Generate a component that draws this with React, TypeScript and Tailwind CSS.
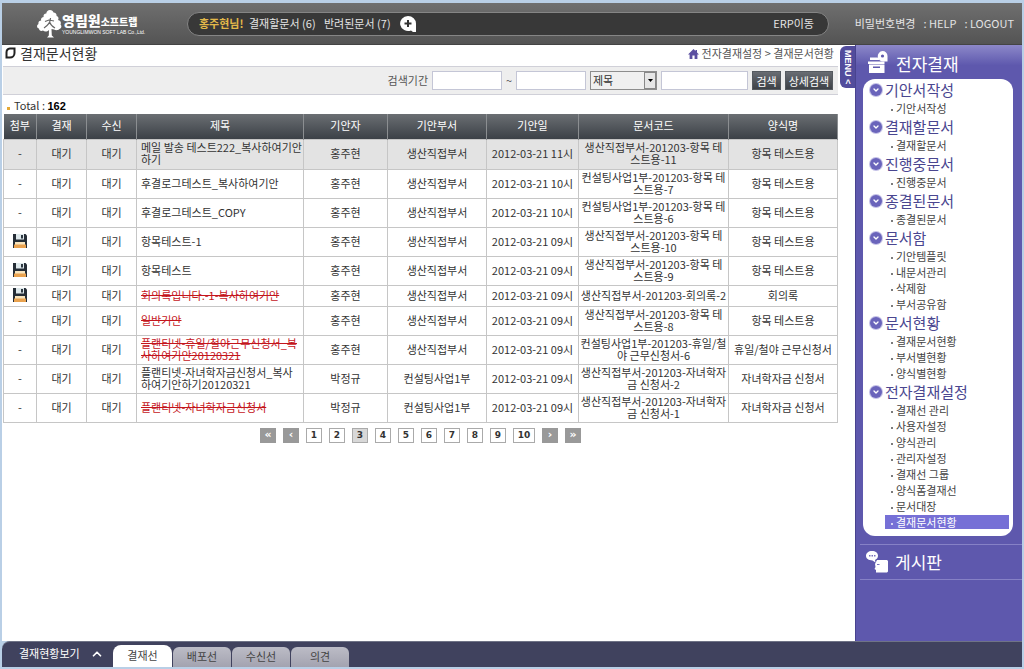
import React from "react";
import { ChevronDown, ChevronUp } from "lucide-react";

type DocRow = {
  attached?: boolean;
  title: string;
  rejected?: boolean;
  drafter: string;
  dept: string;
  date: string;
  code: string;
  form: string;
  selected?: boolean;
};

const rows: DocRow[] = [
  { title: "메일 발송 테스트222_복사하여기안\n하기", drafter: "홍주현", dept: "생산직접부서", date: "2012-03-21 11시", code: "생산직접부서-201203-항목 테\n스트용-11", form: "항목 테스트용", selected: true },
  { title: "후결로그테스트_복사하여기안", drafter: "홍주현", dept: "생산직접부서", date: "2012-03-21 10시", code: "컨설팅사업1부-201203-항목 테\n스트용-7", form: "항목 테스트용" },
  { title: "후결로그테스트_COPY", drafter: "홍주현", dept: "생산직접부서", date: "2012-03-21 10시", code: "컨설팅사업1부-201203-항목 테\n스트용-6", form: "항목 테스트용" },
  { attached: true, title: "항목테스트-1", drafter: "홍주현", dept: "생산직접부서", date: "2012-03-21 09시", code: "생산직접부서-201203-항목 테\n스트용-10", form: "항목 테스트용" },
  { attached: true, title: "항목테스트", drafter: "홍주현", dept: "생산직접부서", date: "2012-03-21 09시", code: "생산직접부서-201203-항목 테\n스트용-9", form: "항목 테스트용" },
  { attached: true, title: "회의록입니다.-1-복사하여기안", rejected: true, drafter: "홍주현", dept: "생산직접부서", date: "2012-03-21 09시", code: "생산직접부서-201203-회의록-2", form: "회의록" },
  { title: "일반기안", rejected: true, drafter: "홍주현", dept: "생산직접부서", date: "2012-03-21 09시", code: "생산직접부서-201203-항목 테\n스트용-8", form: "항목 테스트용" },
  { title: "플랜티넷-휴일/철야근무신청서_복\n사하여기안20120321", rejected: true, drafter: "홍주현", dept: "생산직접부서", date: "2012-03-21 09시", code: "컨설팅사업1부-201203-휴일/철\n야 근무신청서-6", form: "휴일/철야 근무신청서" },
  { title: "플랜티넷-자녀학자금신청서_복사\n하여기안하기20120321", drafter: "박정규", dept: "컨설팅사업1부", date: "2012-03-21 09시", code: "생산직접부서-201203-자녀학자\n금 신청서-2", form: "자녀학자금 신청서" },
  { title: "플랜티넷-자녀학자금신청서", rejected: true, drafter: "박정규", dept: "컨설팅사업1부", date: "2012-03-21 09시", code: "생산직접부서-201203-자녀학자\n금 신청서-1", form: "자녀학자금 신청서" },
];

const columns = [
  { name: "첨부", width: "w-[33px]" },
  { name: "결재", width: "w-[50px]" },
  { name: "수신", width: "w-[50px]" },
  { name: "제목", width: "" },
  { name: "기안자", width: "w-[84px]" },
  { name: "기안부서", width: "w-[99px]" },
  { name: "기안일", width: "w-[92px]" },
  { name: "문서코드", width: "w-[150px]" },
  { name: "양식명", width: "w-[109px]" },
];

const menu = [
  { title: "기안서작성", items: ["기안서작성"] },
  { title: "결재할문서", items: ["결재할문서"] },
  { title: "진행중문서", items: ["진행중문서"] },
  { title: "종결된문서", items: ["종결된문서"] },
  { title: "문서함", items: ["기안템플릿", "내문서관리", "삭제함", "부서공유함"] },
  { title: "문서현황", items: ["결재문서현황", "부서별현황", "양식별현황"] },
  {
    title: "전자결재설정",
    items: ["결재선 관리", "사용자설정", "양식관리", "관리자설정", "결재선 그룹", "양식폼결재선", "문서대장", "결재문서현황"],
  },
];

function TreeLogo() {
  return (
    <svg width="25" height="28" viewBox="0 0 25 28" fill="#fff" aria-hidden="true">
      <path d="M13 0c2 0 3 1 3.500 2.500 2 0 3.500 1.500 3 3.500 2 .5 2.500 2.500 1.500 4 2.500.5 3.500 2.500 2.500 4.500 1.500 1.500 1 4-1 4.500-1.500 1.500-4 1.500-5.500.5L14.500 19l.3 6.500 2.200 2h-7l1.800-2 .2-5.500c-2 2-4.500 2-6 .5-2 1-4 0-4-2C-.5 18-.5 15 1.500 14c-.5-2 .8-3.500 2.700-3.500C3.500 8.500 5 7 6.700 7 6 5 7.500 3.300 9.300 3.500 9.500 1.500 11 0 13 0z" />
      <path d="M13.500 8c0 4-2 7-6.500 10M12.500 12c1 3 3 4.500 5.500 6M8 11.500l4-1.500 5 1" fill="none" stroke="#666" strokeWidth="1.200" />
    </svg>
  );
}

function FloppyIcon() {
  return (
    <svg width="14" height="14" viewBox="0 0 14 14" className="mx-auto block" role="img" aria-label="첨부파일">
      <path d="M0 0h12.500L14 1.500V14H0z" fill="#252d36" />
      <path d="M3 0h8v5.500H3z" fill="#dfe9ec" />
      <path d="M8 1h2v3.500H8z" fill="#2d3740" />
      <path d="M2 8h10v3H2z" fill="#f8e4bd" />
      <path d="M1 10.500h12V14H1z" fill="#e9a24f" />
    </svg>
  );
}

function HomeIcon() {
  return (
    <svg width="11" height="10" viewBox="0 0 11 10" fill="#5b4fa0" aria-hidden="true">
      <path d="M5.500 0 0 5.500h1.600V10h2.800V6.500h2.200V10h2.800V5.500H11L9 3.500V1H7.500v1z" />
    </svg>
  );
}

function DrawerIcon() {
  return (
    <svg width="20" height="22" viewBox="0 0 20 22" fill="#fff" aria-hidden="true">
      <path d="M2 6.500h9V9H2zM0 10.500h16.500V13H0zM1 13.500h15.500V22H1z" />
      <path d="M5 15.500h7V17H5z" fill="#5e58ad" />
      <path d="M14.500 0a5 5 0 0 1 5 5v5.500h-4A5 5 0 1 1 14.500 0z" />
      <circle cx="14.500" cy="5" r="1.600" fill="#5e58ad" />
    </svg>
  );
}

function BoardIcon() {
  return (
    <svg width="23" height="24" viewBox="0 0 23 24" fill="#fff" aria-hidden="true">
      <path d="M6 1c3.500 0 6 2 6 4.800 0 2-1.500 3.700-3 4.200l.5 2.500-3-2C2.500 10.500 0 8.500 0 5.800S2.500 1 6 1z" />
      <path d="M11 10h10l1 1v10.500L21 22.500H10V20l-1.500-1 1-2-.5-3z" />
      <path d="M3 5h1.500v1.500H3zM5.500 5H7v1.500H5.500zM8 5h1.500v1.500H8zM11 14h2.500v1H11z" fill="#7771bd" />
    </svg>
  );
}

function Header() {
  return (
    <header className="flex h-[42px] shrink-0 items-center border-b border-[#444] bg-linear-to-b from-[#6f6f6f] to-[#545454] text-[11px] text-[#e4e4e4]">
      <a href="#" className="flex w-[185px] shrink-0 items-center pl-[35px] text-white">
        <TreeLogo />
        <span className="flex flex-col">
          <span className="flex items-end font-black leading-4">
            <span className="text-[14px]">영림원</span>
            <span className="text-[10px] leading-3">소프트랩</span>
          </span>
          <span className="h-2 whitespace-nowrap font-['Liberation_Sans'] text-[5px] leading-2">YOUNGLIMWON SOFT LAB Co.,Ltd.</span>
        </span>
      </a>
      <div className="flex h-6 flex-1 items-center rounded-full border border-[#858585] bg-[#383838] pl-[11px] pr-3.5">
        <span className="w-[50px] font-bold text-[#e3b84a]">홍주현님!</span>
        <a href="#" className="w-[75px] whitespace-nowrap">결재할문서 (6)</a>
        <a href="#" className="w-[76px] whitespace-nowrap">반려된문서 (7)</a>
        <button aria-label="추가">
          <svg width="17" height="16" viewBox="0 0 17 16" aria-hidden="true">
            <path d="M8 0a8 7.500 0 0 1 8 7.500V16h-3l-2-1.500A8 7.500 0 1 1 8 0z" fill="#fff" />
            <path d="M8 4v7M4.500 7.500h7" stroke="#333" strokeWidth="2" />
          </svg>
        </button>
        <a href="#" className="ml-auto">ERP이동</a>
      </div>
      <nav className="flex w-[193px] shrink-0 justify-end gap-2 whitespace-nowrap pr-2">
        <a href="#">비밀번호변경</a>
        <a href="#">: HELP</a>
        <a href="#">: LOGOUT</a>
      </nav>
    </header>
  );
}

function SearchBar() {
  const field = "h-[19px] border border-[#c4c6d6] bg-white px-1";
  const button = "h-[19px] border border-[#555a60] bg-linear-to-b from-[#696d73] to-[#3d4147] leading-4 text-white";
  return (
    <form className="flex h-[29px] items-center justify-end gap-1 border-y border-[#d0d0d8] bg-[#eeeeee] pr-[5px] text-[#555]" onSubmit={(e) => e.preventDefault()}>
      <label htmlFor="from">검색기간</label>
      <input id="from" className={`${field} w-[70px]`} />
      <span className="w-1.5 text-center">~</span>
      <input aria-label="종료일" className={`${field} w-[70px]`} />
      <div className="relative w-[67px]">
        <select aria-label="검색조건" className="block h-[19px] w-full appearance-none border border-[#8d8d8d] bg-[#f0f0f0] pl-0.5 text-[#333]">
          <option>제목</option>
        </select>
        <span className="pointer-events-none absolute inset-y-px right-px flex w-3 items-center justify-center border border-[#888] bg-[#e6e6e6]">
          <svg width="5" height="3" viewBox="0 0 5 3" aria-hidden="true">
            <path d="M0 0h5L2.500 3z" />
          </svg>
        </span>
      </div>
      <input aria-label="검색어" className={`${field} w-[87px]`} />
      <button className={`${button} w-[29px]`}>검색</button>
      <button className={`${button} w-12`}>상세검색</button>
    </form>
  );
}

function DocTable() {
  return (
    <table className="w-full table-fixed border-collapse text-center leading-3 text-[#333]">
      <thead>
        <tr className="h-[25px] bg-linear-to-b from-[#6b6f73] to-[#3c4147] text-white">
          {columns.map((c) => (
            <th key={c.name} className={`${c.width} border-x border-[#8b8e91] pb-0.5 font-normal first:border-l-0`}>
              {c.name}
            </th>
          ))}
        </tr>
      </thead>
      <tbody>
        {rows.map((r, i) => (
          <tr
            key={i}
            className={`${r.selected ? "h-[30px] bg-[#e3e3e3]" : ""} [&>td]:border [&>td]:border-[#c6c6c6] [&>td]:pt-px [&>td]:pb-[3px] [&>td]:whitespace-pre-line`}
          >
            <td>{r.attached ? <FloppyIcon /> : "-"}</td>
            <td>대기</td>
            <td>대기</td>
            <td className="pl-1 text-left">
              <a href="#" className={r.rejected ? "text-[#c4151c] line-through" : ""}>
                {r.title}
              </a>
            </td>
            <td>{r.drafter}</td>
            <td>{r.dept}</td>
            <td>{r.date}</td>
            <td className="h-[21px]">{r.code}</td>
            <td>{r.form}</td>
          </tr>
        ))}
      </tbody>
    </table>
  );
}

function Pagination() {
  const arrow = "h-[15px] w-4 bg-[#999] text-[11px] text-white";
  return (
    <nav className="mt-[5px] flex justify-center gap-[7px] font-['DejaVu_Sans'] text-[9px] leading-3 font-bold text-[#333]">
      <button className={arrow}>«</button>
      <button className={arrow}>‹</button>
      {[1, 2, 3, 4, 5, 6, 7, 8, 9, 10].map((n) => (
        <button
          key={n}
          className={`h-[15px] border border-[#aaa] ${n === 10 ? "w-[22px]" : "w-4"} ${n === 3 ? "bg-[#d8d8d8]" : "bg-white"}`}
        >
          {n}
        </button>
      ))}
      <button className={arrow}>›</button>
      <button className={arrow}>»</button>
    </nav>
  );
}

function Sidebar() {
  return (
    <aside className="w-[167px] shrink-0 border-l border-[#48438f] bg-[#5e58ad]">
      <div className="flex h-[34px] items-center gap-2 bg-linear-to-b from-[#8d88c9] to-[#5e58ad] to-60% pl-3 text-[17px] text-white">
        <DrawerIcon />
        <h2 className="pt-1">전자결재</h2>
      </div>
      <nav className="mr-[9px] ml-[7px] rounded-xl bg-white pb-1.5">
        {menu.map((group) => (
          <section key={group.title}>
            <h3 className="flex h-[21px] items-center gap-[3px] pl-[7px] text-[15px] leading-5 text-[#4a4690]">
              <span className="flex size-3 items-center justify-center rounded-full bg-[#6a64bb] ring-1 ring-[#c3c0e6]">
                <ChevronDown size={8} color="#fff" strokeWidth={4} />
              </span>
              <a href="#">{group.title}</a>
            </h3>
            <ul>
              {group.items.map((item, i) => (
                <li key={item} className="flex h-4 items-center pr-1 pl-[22px]">
                  <a
                    href="#"
                    className={`flex h-3.5 flex-1 items-center gap-[3px] pl-1.5 leading-3 ${
                      i === 7 ? "bg-[#7670d6] text-white" : "text-[#444]"
                    }`}
                  >
                    <span className="mt-1 size-0.5 bg-current opacity-70" />
                    {item}
                  </a>
                </li>
              ))}
            </ul>
          </section>
        ))}
      </nav>
      <div className="mt-2 ml-1 flex h-9 items-center gap-1.5 border-y border-[#8681c6] pl-1.5 text-[17px] text-white">
        <BoardIcon />
        <h2>게시판</h2>
      </div>
    </aside>
  );
}

function BottomBar() {
  return (
    <footer className="flex h-[26px] shrink-0 items-end rounded-tl-lg border-t border-[#6f7386] bg-[#40425e] text-[#444]">
      <button className="flex h-full w-[111px] items-center gap-2.5 pl-[17px] pb-0.5 text-white">
        결재현황보기
        <ChevronUp size={14} strokeWidth={3} />
      </button>
      <div className="flex items-end gap-px" role="tablist">
        {["결재선", "배포선", "수신선", "의견"].map((tab, i) => (
          <button
            key={tab}
            role="tab"
            aria-selected={i === 0}
            className={i === 0 ? "h-[22px] w-[59px] rounded-t-lg bg-white pb-0.5" : "h-5 w-[58px] rounded-t-md bg-linear-to-b from-[#bcbcc6] to-[#a3a3b0] pb-0.5"}
          >
            {tab}
          </button>
        ))}
      </div>
    </footer>
  );
}

export default function App() {
  return (
    <div className="flex min-h-screen flex-col bg-[#b9cfe6] px-0.5 pt-[3px] pb-0.5 font-['Noto_Sans_CJK_KR',sans-serif] text-[11px]">
      <Header />
      <div className="flex flex-1 bg-white">
        <main className="min-w-0 flex-1 pl-px">
          <div className="flex h-[21px] items-start justify-between pr-1 pl-0.5">
            <h1 className="flex items-center gap-1 text-[14px] leading-4 text-[#333]">
              <svg width="11" height="12" viewBox="0 0 11 12" aria-hidden="true">
                <path d="M5 1.500h4.500V6a4.500 4.500 0 0 1-4.500 4.500H1.500V5.500A4 4 0 0 1 5 1.500z" fill="none" stroke="#222" strokeWidth="2" />
              </svg>
              결재문서현황
            </h1>
            <p className="flex items-center gap-[3px] leading-[17px] text-[#555]">
              <HomeIcon />
              전자결재설정 &gt; 결재문서현황
            </p>
          </div>
          <SearchBar />
          <p className="flex h-[19px] items-end gap-1 pl-1 leading-4 text-[#333]">
            <span className="mb-1 size-[3px] bg-[#e6a935]" />
            <span>
              Total : <b className="font-['Liberation_Sans'] text-black">162</b>
            </span>
          </p>
          <DocTable />
          <Pagination />
        </main>
        <div className="w-[17px] shrink-0 pt-px pl-0.5">
          <button className="flex h-[42px] w-full items-center justify-center rounded-l-md bg-[#524c9c] font-['Liberation_Sans'] text-[9px] font-bold text-white [writing-mode:vertical-rl]">
            MENU &lt;
          </button>
        </div>
        <Sidebar />
      </div>
      <BottomBar />
    </div>
  );
}
